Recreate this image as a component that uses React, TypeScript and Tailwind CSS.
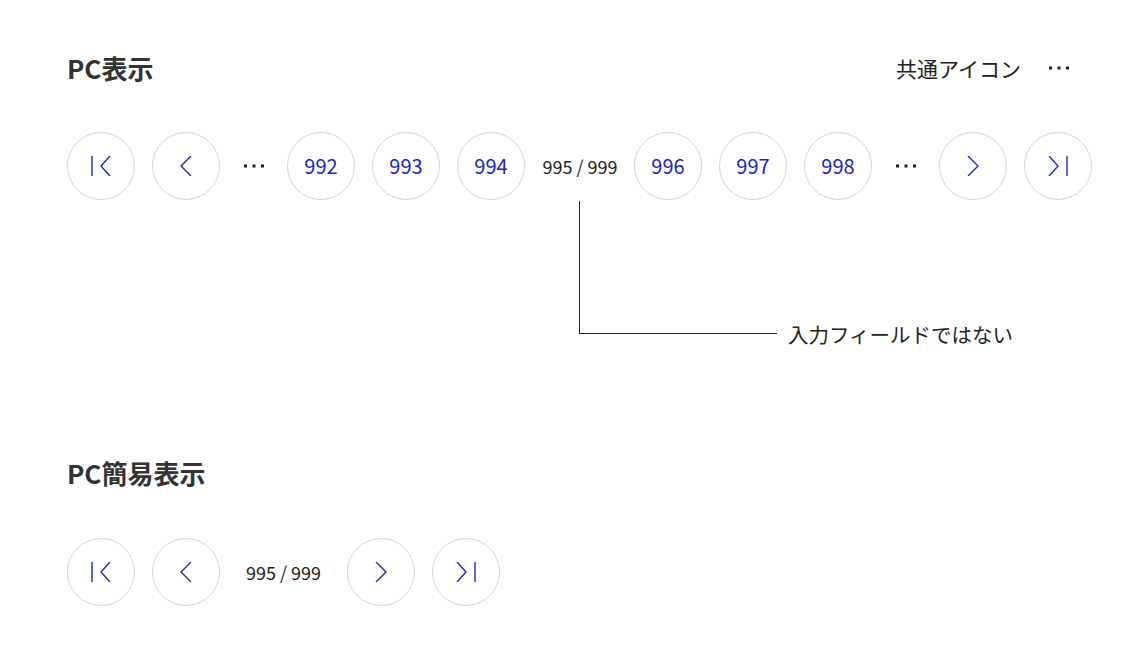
import type { ReactNode } from "react";

const BLUE = "#1a26c0";

function Circle({ children }: { children: ReactNode }) {
  return (
    <div className="flex h-[68px] w-[68px] shrink-0 items-center justify-center rounded-full border-[1.5px] border-[#d6d6d6] bg-white">
      {children}
    </div>
  );
}

function Icon({ kind }: { kind: "first" | "prev" | "next" | "last" }) {
  return (
    <svg width="20" height="20" viewBox="0 0 20 20" fill="none" stroke={BLUE} strokeWidth="1.4">
      {kind === "first" && (
        <>
          <line x1="1" y1="0" x2="1" y2="20" />
          <polyline points="19,0 10,10 19,20" />
        </>
      )}
      {kind === "prev" && <polyline points="15,0 5,10 15,20" />}
      {kind === "next" && <polyline points="5,0 15,10 5,20" />}
      {kind === "last" && (
        <>
          <polyline points="1,0 10,10 1,20" />
          <line x1="19" y1="0" x2="19" y2="20" />
        </>
      )}
    </svg>
  );
}

function Dots() {
  return (
    <svg width="24" height="6" viewBox="0 0 24 6" fill="#222">
      <rect x="2" y="1.5" width="3" height="3" />
      <rect x="10.5" y="1.5" width="3" height="3" />
      <rect x="19" y="1.5" width="3" height="3" />
    </svg>
  );
}

function Page({ n }: { n: number }) {
  return (
    <Circle>
      <span className="text-[20px] leading-none" style={{ color: BLUE }}>
        {n}
      </span>
    </Circle>
  );
}

function Ellipsis() {
  return (
    <div className="flex w-[33px] shrink-0 justify-center">
      <Dots />
    </div>
  );
}

export default function App() {
  return (
    <div
      className="h-[662px] w-[1136px] overflow-hidden bg-white pt-[50px] pl-[67px] pr-[65px] text-[#222]"
      style={{ fontFamily: '"Noto Sans CJK JP", "Noto Sans", sans-serif' }}
    >
      <div className="flex h-[36px] items-center justify-between">
        <h2 className="text-[26px] font-bold leading-[36px] text-[#333]">PC表示</h2>
        <div className="flex items-center gap-[26px]">
          <span className="text-[21px] leading-none">共通アイコン</span>
          <Dots />
        </div>
      </div>

      <div className="mt-[46px] flex items-center gap-[17px]">
        <Circle>
          <Icon kind="first" />
        </Circle>
        <Circle>
          <Icon kind="prev" />
        </Circle>
        <Ellipsis />
        <Page n={992} />
        <Page n={993} />
        <Page n={994} />
        <span className="mr-[-1px] w-[76px] shrink-0 whitespace-nowrap text-center text-[18px] leading-none">
          995 / 999
        </span>
        <Page n={996} />
        <Page n={997} />
        <Page n={998} />
        <Ellipsis />
        <Circle>
          <Icon kind="next" />
        </Circle>
        <Circle>
          <Icon kind="last" />
        </Circle>
      </div>

      <div className="mt-px ml-[512px] flex items-end">
        <div className="h-[133px] w-[198px] border-b border-l border-[#222]" />
        <span className="ml-[11px] mb-[-10px] text-[20.5px] leading-[20px]">入力フィールドではない</span>
      </div>

      <h2 className="mt-[121px] text-[26px] font-bold leading-[36px] text-[#333]">PC簡易表示</h2>

      <div className="mt-[47px] flex items-center gap-[17px]">
        <Circle>
          <Icon kind="first" />
        </Circle>
        <Circle>
          <Icon kind="prev" />
        </Circle>
        <span className="w-[93px] shrink-0 whitespace-nowrap text-center text-[18px] leading-none">995 / 999</span>
        <Circle>
          <Icon kind="next" />
        </Circle>
        <Circle>
          <Icon kind="last" />
        </Circle>
      </div>
    </div>
  );
}
